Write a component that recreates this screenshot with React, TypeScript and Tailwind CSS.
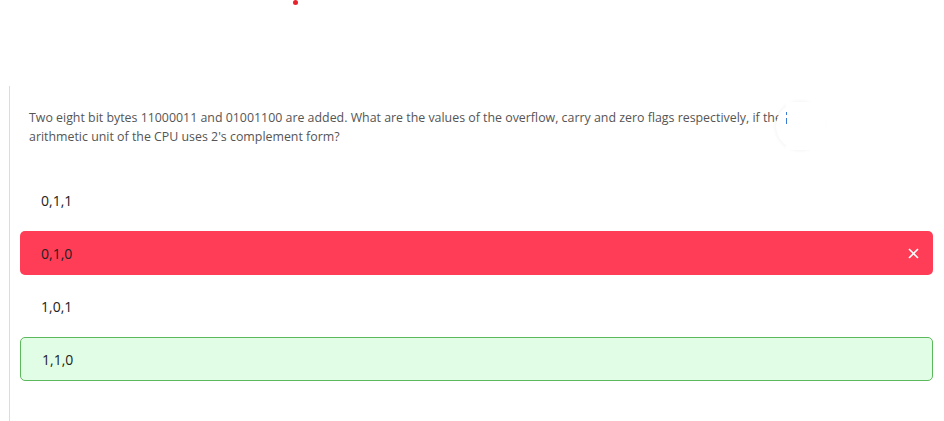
import React from 'react'

const options = [
  { id: 'a', label: '0,1,1', state: 'none' },
  { id: 'b', label: '0,1,0', state: 'wrong' },
  { id: 'c', label: '1,0,1', state: 'none' },
  { id: 'd', label: '1,1,0', state: 'right' },
]

export default function App() {
  return (
    <div className="h-[421px] w-[944px] overflow-hidden bg-white" style={{ fontFamily: '"Open Sans", sans-serif' }}>
      {/* top strip with the recording dot */}
      <div className="h-[86px] pl-[293px]">
        <span className="block h-[5px] w-[5px] rounded-full bg-[#e8212b]" />
      </div>

      <div className="ml-[9px] mr-[11px] h-[335px] border-l border-[#dcdcdc] pl-[10px] pt-[22px]">
        <div className="relative">
          <p className="w-[800px] pl-[9px] text-[12.38px] leading-[19px] text-[#555]">
            Two eight bit bytes 11000011 and 01001100 are added. What are the values of the overflow, carry and zero flags respectively, if the arithmetic unit of the CPU uses 2's complement form?
          </p>
          <div className="absolute left-[756px] top-[-6px] h-[48px] w-[48px] rounded-full bg-white shadow-[0_0_4px_rgba(0,0,0,0.07)]" />
          <div className="absolute left-[766px] top-[-6px] flex h-[48px] w-[40px] flex-col items-start gap-[3px] bg-white pt-[10px]">
            <span className="h-[3px] w-[1px] bg-[#3b7bd8]" />
            <span className="h-[6px] w-[1px] bg-[#3b7bd8]" />
          </div>
        </div>

        <div className="mt-[32px] flex flex-col gap-[9px]">
          {options.map((o) => (
            <div
              key={o.id}
              className={`flex h-[44px] items-center justify-between rounded-[5px] pl-[21px] pr-[14px] text-[14px] text-[#222] ${
                o.state === 'wrong'
                  ? 'bg-[#ff3d57]'
                  : o.state === 'right'
                  ? 'border border-[#5cb85c] bg-[#e2fde6] pl-[20px]'
                  : ''
              }`}
            >
              <span>{o.label}</span>
              {o.state === 'wrong' && (
                <svg width="11" height="11" viewBox="0 0 11 11" fill="none" stroke="white" strokeWidth="1.6">
                  <path d="M1 1 L10 10 M10 1 L1 10" />
                </svg>
              )}
            </div>
          ))}
        </div>
      </div>
    </div>
  )
}
